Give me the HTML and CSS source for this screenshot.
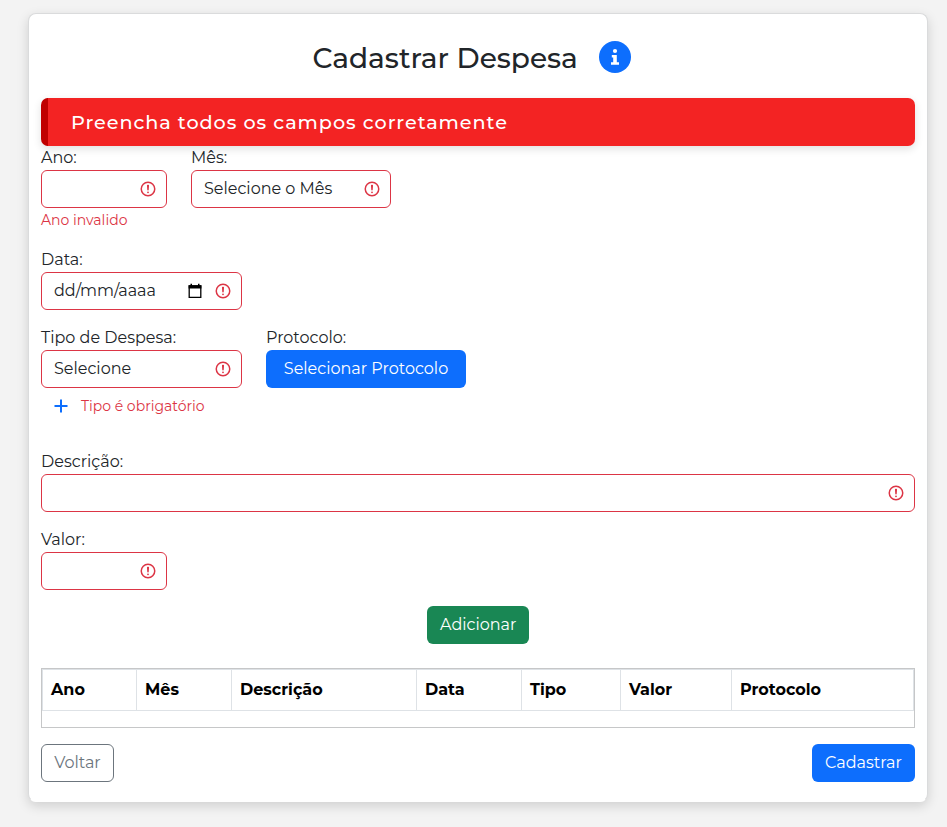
FILE: index.html
```html
<!DOCTYPE html>
<html lang="pt-BR">
<head>
<meta charset="utf-8">
<title>Cadastrar Despesa</title>
<link rel="stylesheet" href="styles.css">
</head>
<body>
<svg class="defs" width="0" height="0" aria-hidden="true">
  <symbol id="invalid" viewBox="0 0 12 12">
    <circle cx="6" cy="6" r="4.5" fill="none" stroke="#dc3545"/>
    <path d="M5.8 3.6h.4L6 6.5z" fill="none" stroke="#dc3545" stroke-linejoin="round"/>
    <circle cx="6" cy="8.2" r=".6" fill="#dc3545"/>
  </symbol>
</svg>
<main class="card">
  <header class="head">
    <h1 class="title">Cadastrar Despesa</h1>
    <svg class="info" viewBox="0 0 32 32"><circle cx="16" cy="16" r="16" fill="#0d6efd"/><circle cx="16" cy="10" r="2.1" fill="#fff"/><path d="M12.8 14h5v7.2h2.2v2.6h-8v-2.6h2.2v-4.6h-1.4z" fill="#fff"/></svg>
  </header>
  <div class="alert"><span>Preencha todos os campos corretamente</span></div>
  <form>
    <div class="row row-period">
      <div class="field w-small">
        <label>Ano:</label>
        <div class="control"><svg class="mark"><use href="#invalid"/></svg></div>
        <p class="feedback">Ano invalido</p>
      </div>
      <div class="field w-month">
        <label>Mês:</label>
        <div class="control"><span>Selecione o Mês</span><svg class="mark"><use href="#invalid"/></svg></div>
      </div>
    </div>
    <div class="row">
      <div class="field w-medium">
        <label>Data:</label>
        <div class="control"><span class="date">dd/mm/aaaa</span><svg class="calendar" viewBox="0 0 14 16"><path d="M1.2 3h11.6v11.3H1.2z" fill="none" stroke="#000" stroke-width="1.3"/><path d="M.6 2.3h12.8v3.2H.6zM2.5.8H4v2H2.5zM10 .8h1.5v2H10z"/></svg><svg class="mark"><use href="#invalid"/></svg></div>
      </div>
    </div>
    <div class="row row-type">
      <div class="field w-medium">
        <label>Tipo de Despesa:</label>
        <div class="control"><span>Selecione</span><svg class="mark"><use href="#invalid"/></svg></div>
        <div class="add-type"><svg class="plus" viewBox="0 0 14 14"><path d="M7 .5v13M.5 7h13" stroke="#0d6efd" stroke-width="2"/></svg><span class="feedback">Tipo é obrigatório</span></div>
      </div>
      <div class="field w-month">
        <label>Protocolo:</label>
        <button type="button" class="btn primary protocol">Selecionar Protocolo</button>
      </div>
    </div>
    <div class="row">
      <div class="field w-full">
        <label>Descrição:</label>
        <div class="control"><svg class="mark"><use href="#invalid"/></svg></div>
      </div>
    </div>
    <div class="row">
      <div class="field w-small">
        <label>Valor:</label>
        <div class="control"><svg class="mark"><use href="#invalid"/></svg></div>
      </div>
    </div>
    <div class="center"><button type="button" class="btn success">Adicionar</button></div>
    <div class="table-box">
      <table>
        <colgroup><col class="c1"><col class="c2"><col class="c3"><col class="c4"><col class="c5"><col class="c6"><col class="c7"></colgroup>
        <thead><tr><th>Ano</th><th>Mês</th><th>Descrição</th><th>Data</th><th>Tipo</th><th>Valor</th><th>Protocolo</th></tr></thead>
      </table>
    </div>
    <div class="actions"><button type="button" class="btn outline">Voltar</button><button type="button" class="btn primary submit">Cadastrar</button></div>
  </form>
</main>
</body>
</html>
```
FILE: styles.css
```css
* { box-sizing: border-box; }
body {
  margin: 0;
  padding: 13px 19px 24px 28px;
  background: #f3f3f3;
  color: #212529;
  font: 400 16px/24px Montserrat, Inter, sans-serif;
}
.defs { position: absolute; }
.card {
  height: 789px;
  padding: 0 12px;
  background: #fff;
  border: 1px solid #dadbdc;
  border-bottom-color: #fff;
  border-radius: 8px;
  box-shadow: 0 4px 12px rgba(0, 0, 0, .15);
}
.head { display: flex; justify-content: center; align-items: center; height: 84px; gap: 22px; padding: 2px 13px 0 0; }
.title { margin: 0; padding-top: 2px; width: 264px; font-size: 28px; line-height: 34px; font-weight: 500; white-space: nowrap; }
.info { width: 32px; height: 32px; }
.alert {
  display: flex;
  align-items: center;
  height: 48px;
  padding-left: 23px;
  border-left: 7px solid #c00000;
  border-radius: 7px;
  background: #f32323;
  color: #fff;
  font-size: 19.2px;
  font-weight: 500;
  letter-spacing: .96px;
  box-shadow: 0 3px 8px rgba(0, 0, 0, .12);
}
.row { display: flex; gap: 24px; margin-bottom: 16px; }
.row-period { height: 86px; }
.row-type { height: 108px; }
.w-small { width: 126px; }
.w-month { width: 200px; }
.w-medium { width: 201px; }
.w-full { width: 100%; }
label { display: block; height: 24px; white-space: nowrap; }
.control {
  display: flex;
  align-items: center;
  height: 38px;
  padding: 0 9px 0 12px;
  border: 1px solid #dc3545;
  border-radius: 6px;
  background: #fff;
  white-space: nowrap;
}
.mark { width: 18px; height: 18px; margin-left: auto; }
.calendar { width: 14px; height: 16px; margin-left: auto; }
.calendar + .mark { margin-left: 12px; }
.feedback { margin: 0; color: #dc3545; font-size: 14px; white-space: nowrap; }
.add-type { display: flex; align-items: center; height: 36px; padding-left: 13px; gap: 13px; }
.plus { width: 14px; height: 14px; }
.btn {
  height: 38px;
  padding: 0 12px;
  border: 1px solid transparent;
  border-radius: 6px;
  font: inherit;
  color: #fff;
  white-space: nowrap;
}
.primary { background: #0d6efd; }
.protocol { width: 200px; }
.success { width: 102px; background: #198754; }
.outline { width: 73px; background: #fff; border-color: #6c757d; color: #6c757d; }
.submit { width: 103px; }
.center { display: flex; justify-content: center; margin-bottom: 24px; }
.table-box { height: 60px; border: 1px solid #c6c7c8; }
table { width: 872px; table-layout: fixed; border-collapse: collapse; }
th { height: 41px; padding: 0 8px; border: 1px solid #dee2e6; color: #000; font-weight: 700; text-align: left; }
.c1 { width: 94px; }
.c2 { width: 95px; }
.c3 { width: 185px; }
.c4 { width: 105px; }
.c5 { width: 99px; }
.c6 { width: 111px; }
.actions { display: flex; justify-content: space-between; margin-top: 16px; }
```
